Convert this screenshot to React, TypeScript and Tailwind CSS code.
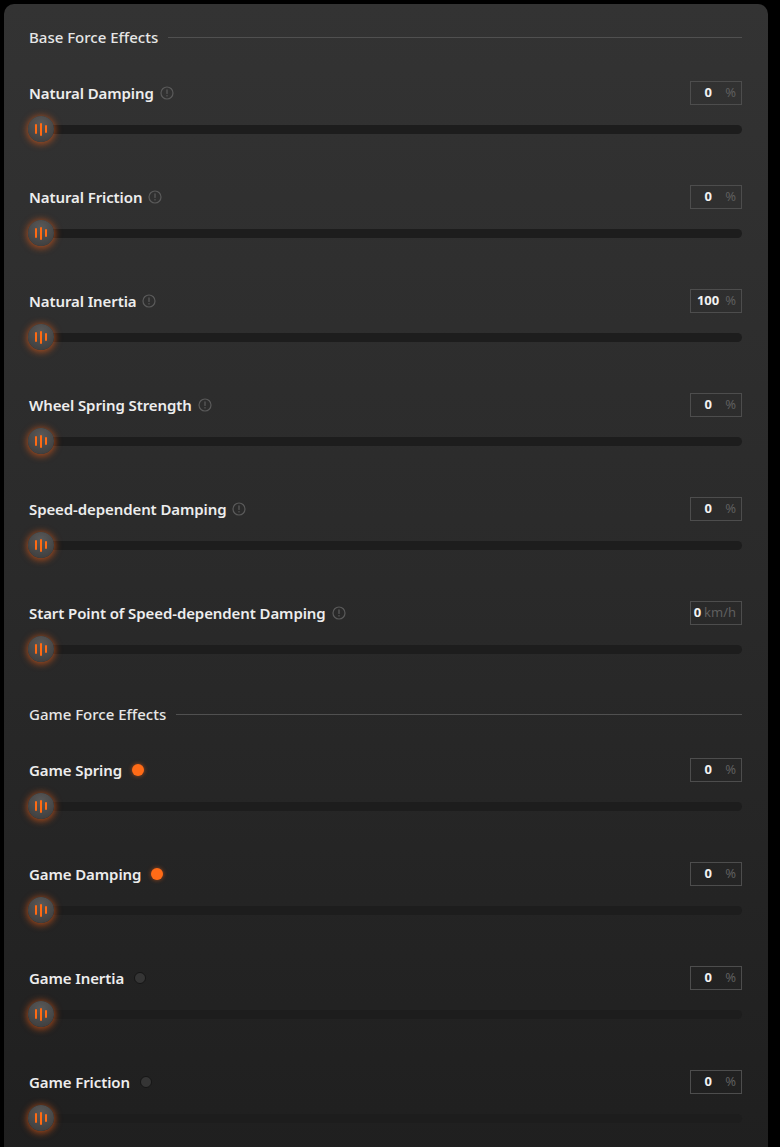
import React from "react";

type Row = {
  label: string;
  value: string;
  unit?: string;
  info?: boolean;
  dot?: "on" | "off";
};

const baseRows: Row[] = [
  { label: "Natural Damping", value: "0", info: true },
  { label: "Natural Friction", value: "0", info: true },
  { label: "Natural Inertia", value: "100", info: true },
  { label: "Wheel Spring Strength", value: "0", info: true },
  { label: "Speed-dependent Damping", value: "0", info: true },
  { label: "Start Point of Speed-dependent Damping", value: "0", unit: "km/h", info: true },
];

const gameRows: Row[] = [
  { label: "Game Spring", value: "0", dot: "on" },
  { label: "Game Damping", value: "0", dot: "on" },
  { label: "Game Inertia", value: "0", dot: "off" },
  { label: "Game Friction", value: "0", dot: "off" },
];

const InfoIcon = () => (
  <svg width="14" height="14" viewBox="0 0 14 14" className="shrink-0">
    <circle cx="7" cy="7" r="6" fill="none" stroke="#5a5a5a" strokeWidth="1.2" />
    <rect x="6.35" y="3.3" width="1.3" height="4.8" rx="0.6" fill="#5a5a5a" />
    <rect x="6.35" y="9" width="1.3" height="1.5" rx="0.6" fill="#5a5a5a" />
  </svg>
);

const Thumb = () => (
  <div className="absolute left-[-1px] top-0 flex h-[26px] w-[26px] items-center justify-center gap-[3px] rounded-full bg-[radial-gradient(circle_at_50%_30%,#595959,#3a3a3a)] shadow-[0_1px_7px_1px_rgba(255,98,20,0.6)]">
    <span className="h-[10px] w-[2px] rounded-full bg-[#ff6a13]" />
    <span className="h-[13px] w-[2px] rounded-full bg-[#ff6a13]" />
    <span className="h-[8px] w-[2px] rounded-full bg-[#ff6a13]" />
  </div>
);

const SliderRow = ({ row }: { row: Row }) => (
  <div className="flex flex-col">
    <div className="flex h-6 items-center justify-between">
      <div className="flex items-center">
        <span className="text-[15px] font-semibold tracking-[-0.1px] text-[#ededed]">{row.label}</span>
        {row.info && (
          <span className="ml-[6px] flex">
            <InfoIcon />
          </span>
        )}
        {row.dot === "on" && (
          <span className="ml-[10px] h-[12px] w-[12px] rounded-full bg-[#ff6b17] shadow-[0_0_4px_rgba(255,100,20,0.6)]" />
        )}
        {row.dot === "off" && (
          <span className="ml-[10px] h-[12px] w-[12px] rounded-full border border-[#161616] bg-[#353535]" />
        )}
      </div>
      <div className="flex h-6 w-[52px] items-center border border-[#4d4d4d] pr-[5px] text-[13px]">
        <span className="flex-1 text-center font-bold text-[#f2f2f2]">{row.value}</span>
        <span className="text-[#5f5f5f]">{row.unit ?? "%"}</span>
      </div>
    </div>
    <div className="relative mt-[11px] flex h-[26px] items-center">
      <div className="h-[9px] w-full rounded-full bg-[#1d1d1d]" />
      <Thumb />
    </div>
  </div>
);

const SectionHeader = ({ title }: { title: string }) => (
  <div className="flex h-6 items-center gap-[10px]">
    <span className="text-[15px] font-medium text-[#e6e6e6]">{title}</span>
    <div className="h-px flex-1 bg-[#505050]" />
  </div>
);

export default function App() {
  return (
    <div
      className="min-h-[1147px] bg-black pl-[4px] pr-[12px] pt-[4px]"
      style={{ fontFamily: '"Noto Sans", "Open Sans", sans-serif' }}
    >
      <div className="h-[1160px] rounded-[10px] bg-[linear-gradient(180deg,#333333_0%,#2a2a2a_50%,#1f1f1f_100%)] pl-[25px] pr-[26px] pt-[21px]">
        <SectionHeader title="Base Force Effects" />
        <div className="mt-[32px] flex flex-col gap-[43px]">
          {baseRows.map((r) => (
            <SliderRow key={r.label} row={r} />
          ))}
        </div>
        <div className="mt-[40px]">
          <SectionHeader title="Game Force Effects" />
        </div>
        <div className="mt-[32px] flex flex-col gap-[43px]">
          {gameRows.map((r) => (
            <SliderRow key={r.label} row={r} />
          ))}
        </div>
      </div>
    </div>
  );
}
